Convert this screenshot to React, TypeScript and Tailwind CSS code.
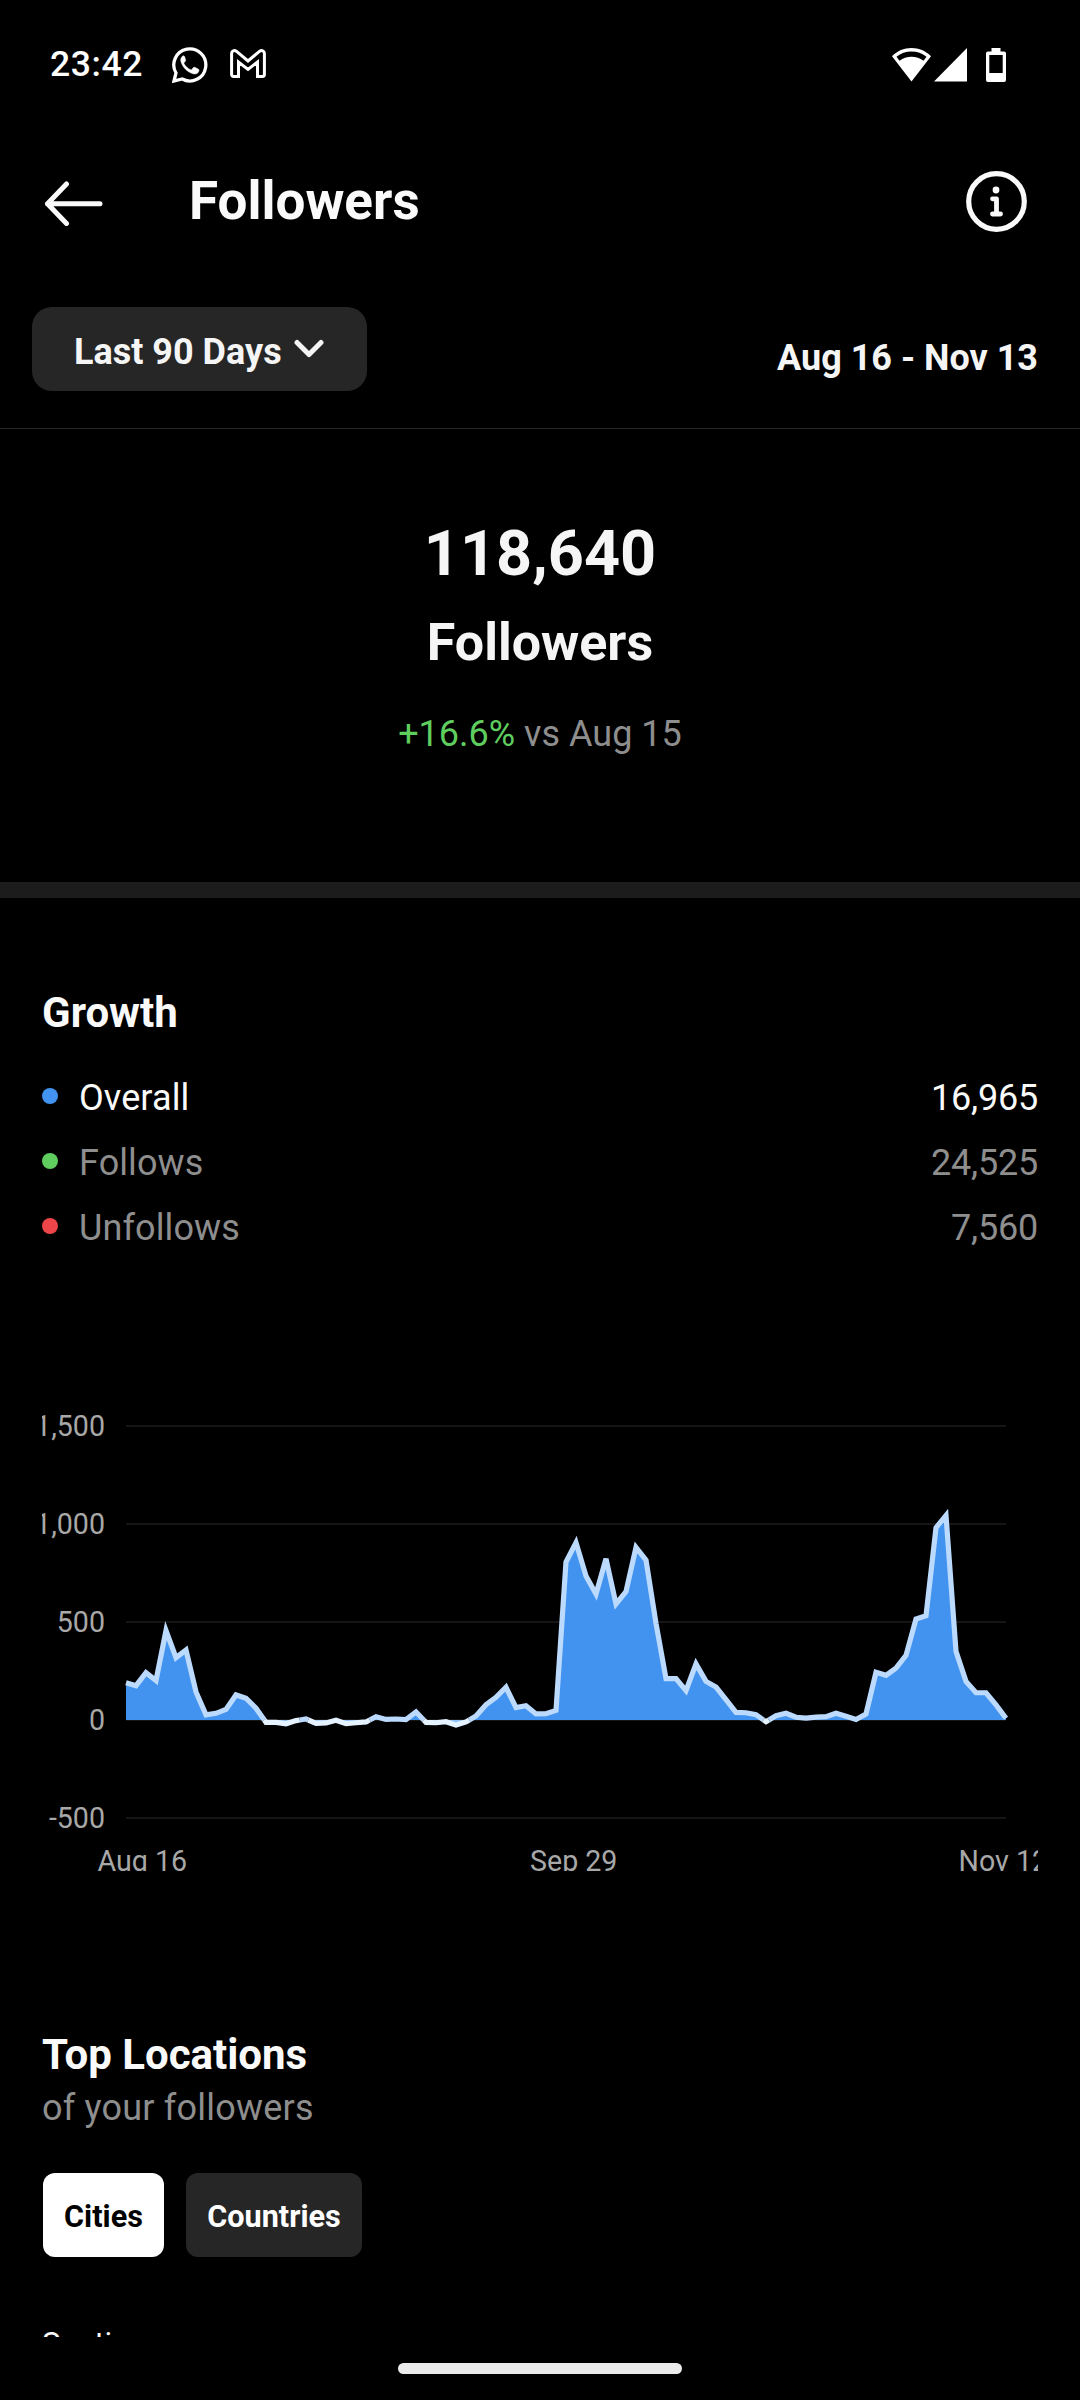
import React from "react";

// Daily net followers, Aug 16 - Nov 12
const growth = [
  190, 175, 241, 201, 456, 318, 357, 143, 26, 34, 54, 128, 111, 60, -12, -12, -19, -3, 5, -17,
  -15, -1, -19, -14, -10, 17, 3, 5, 2, 41, -12, -14, -9, -26, -10, 20, 78, 116, 167, 63,
  73, 31, 32, 49, 806, 905, 735, 643, 823, 592, 655, 881, 816, 493, 211, 211, 150, 286, 197, 168,
  104, 39, 37, 27, -9, 22, 34, 14, 10, 15, 17, 34, 19, 3, 31, 243, 228, 265, 330, 515,
  532, 981, 1044, 350, 197, 139, 139, 77, 9,
];

const LEFT = 84;
const STEP = 10;
const ZERO = 320;
const toY = (value: number) => ZERO - (value * 98) / 500;

interface Segment {
  negative: boolean;
  points: [number, number][];
}

// Splits the series where it crosses zero, so each side gets its own colors
const splitSegments = (values: number[]): Segment[] => {
  const segments: Segment[] = [];
  let current: Segment = { negative: values[0] < 0, points: [] };

  values.forEach((value, i) => {
    const negative = value < 0;
    if (negative !== current.negative) {
      const prev = values[i - 1];
      const x = LEFT + (i - 1 + prev / (prev - value)) * STEP;
      current.points.push([x, ZERO]);
      segments.push(current);
      current = { negative, points: [[x, ZERO]] };
    }
    current.points.push([LEFT + i * STEP, toY(value)]);
  });

  segments.push(current);
  return segments;
};

const segments = splitSegments(growth);

const yTicks = [
  { label: "1,500", value: 1500 },
  { label: "1,000", value: 1000 },
  { label: "500", value: 500 },
  { label: "0", value: 0 },
  { label: "-500", value: -500 },
];

const xTicks = [
  { label: "Aug 16", x: 55.5 },
  { label: "Sep 29", x: 488 },
  { label: "Nov 12", x: 916.5 },
];

const GrowthChart = () => (
  <svg width="996" height="471" viewBox="0 0 996 471" className="mt-[140px] block overflow-hidden">
    {yTicks.map((tick) => (
      <g key={tick.label}>
        <line x1={LEFT} x2={964} y1={toY(tick.value)} y2={toY(tick.value)} stroke="#151515" strokeWidth="2" />
        <text x="63" y={toY(tick.value) + 10} textAnchor="end" fontSize="28.6" fill="#a8a8a8">{tick.label}</text>
      </g>
    ))}

    {segments.map((segment, i) => {
      const line = segment.points.map(([x, y]) => `${x},${y}`).join(" ");
      const first = segment.points[0][0];
      const last = segment.points[segment.points.length - 1][0];
      return (
        <polygon key={i} points={`${first},${ZERO} ${line} ${last},${ZERO}`} fill={segment.negative ? "#8dc0f8" : "#4193ef"} />
      );
    })}
    {segments.map((segment, i) => (
      <polyline
        key={i}
        points={segment.points.map(([x, y]) => `${x},${y}`).join(" ")}
        fill="none"
        stroke={segment.negative ? "#e5f2ff" : "#bbdafd"}
        strokeWidth="5.2"
        strokeMiterlimit="4"
      />
    ))}

    {xTicks.map((tick) => (
      <text key={tick.label} x={tick.x} y="471" fontSize="28.6" fill="#a8a8a8">{tick.label}</text>
    ))}
  </svg>
);

const StatusBar = () => (
  <div className="flex h-[129px] items-center pl-[50px] pr-[74px] text-white">
    <span className="w-[122px] text-[35.5px] font-medium tracking-[0.6px]">23:42</span>
    <svg width="36" height="36" viewBox="0 0 36 36" fill="none">
      <path d="M2 34 4 26A16 16 0 1 1 10.2 32Z" stroke="currentColor" strokeWidth="3.3" />
      <path d="M12.600 9.600c-.5-.9-1.400-.9-2.100-.4-1.500 1.300-2.100 3-1.600 5 1.500 6 6.500 10.800 12.300 12.600 2.500.7 5-.4 5.700-2.700.3-1 0-1.700-.8-2.100l-3.300-1.700c-.6-.3-1.100-.2-1.500.3l-1.400 1.800c-.3.400-.7.500-1.200.3-3-1.300-5-3.200-6.600-6-.2-.4-.2-.7.100-1.100l1.200-1.500c.3-.4.400-.8.200-1.300Z" fill="currentColor" stroke="currentColor" strokeWidth="0.5" />
    </svg>
    <svg width="36" height="29" viewBox="0 0 36 29" fill="none" className="mb-[2px] ml-[22px]">
      <path d="M1.600 4.500C1.600 1.800 4.400.8 6.300 2.200L18 12 29.700 2.200c1.900-1.400 4.700-.4 4.700 2.300v21c0 1.100-.8 1.900-1.900 1.900h-5V13L18 20.400 8.500 13v14.400h-5c-1.100 0-1.900-.8-1.900-1.900Z" stroke="currentColor" strokeWidth="3" />
    </svg>

    <div className="ml-auto flex items-center">
      <svg width="39" height="34" viewBox="0 0 39 34" fill="currentColor">
        <path fillRule="evenodd" d="M19.500 0C12 0 5.300 2.900 0 8.200L19.500 33.500 39 8.200C33.700 2.900 27 0 19.500 0ZM4.500 8.800C8.700 5.300 14 3.500 19.500 3.500S30.300 5.300 34.500 8.800L31.500 12.700C28 10 24 8.700 19.500 8.700S11 10 7.500 12.700Z" />
      </svg>
      <svg width="33" height="34" viewBox="0 0 33 34" fill="currentColor" className="ml-[3px]">
        <path d="M33 0V33.500H0Z" />
      </svg>
      <svg width="20" height="34" viewBox="0 0 20 34" fill="currentColor" className="ml-[19px]">
        <path fillRule="evenodd" d="M5.500 0h9v3.500H18a2 2 0 0 1 2 2V32a2 2 0 0 1-2 2H2a2 2 0 0 1-2-2V5.500a2 2 0 0 1 2-2h3.500ZM3.300 7V25H16.700V7Z" />
      </svg>
    </div>
  </div>
);

const Header = () => (
  <header className="flex h-36 items-center pl-[44px] pr-[53px] text-[#fafafa]">
    <button>
      <svg width="60" height="46" viewBox="0 0 60 46" fill="none" stroke="currentColor" strokeWidth="5" strokeLinecap="round" strokeLinejoin="round" className="mt-[5px]">
        <path d="M22.500 3 3.500 22.700l19 19.700M3.500 22.700H56" />
      </svg>
    </button>
    <h1 className="ml-[85px] text-[53px] font-bold leading-[64px]">Followers</h1>
    <button className="ml-auto">
      <svg width="61" height="61" viewBox="0 0 61 61" fill="none" stroke="currentColor">
        <circle cx="30.500" cy="30.500" r="27.800" strokeWidth="5.200" />
        <circle cx="30" cy="19" r="3.400" fill="currentColor" stroke="none" />
        <path d="M26.500 27.800H30.500V43M26.500 43H34.500" strokeWidth="4.800" strokeLinecap="round" strokeLinejoin="round" />
      </svg>
    </button>
  </header>
);

const FilterBar = () => (
  <div className="flex h-[156px] items-start justify-between border-b border-[#262626] pl-8 pr-[42px] pt-[34px] text-[36px] font-bold text-[#f5f5f5]">
    <button className="flex h-[84px] w-[335px] items-center rounded-[20px] bg-[#262626] pl-[42px]">
      <span className="pt-[5px] leading-[44px]">Last 90 Days</span>
      <svg width="30" height="20" viewBox="0 0 30 20" fill="none" stroke="currentColor" strokeWidth="5" strokeLinecap="round" strokeLinejoin="round" className="ml-3">
        <path d="M3 3.500 15 15.500 27 3.500" />
      </svg>
    </button>
    <span className="pt-[29px] leading-[44px]">Aug 16 - Nov 13</span>
  </div>
);

interface LegendRowProps {
  color: string;
  label: string;
  value: string;
  active?: boolean;
}

const LegendRow: React.FC<LegendRowProps> = ({ color, label, value, active = false }) => (
  <div className={`flex h-[65px] items-center text-[36px] ${active ? "text-[#fafafa]" : "text-[#8e8e8e]"}`}>
    <span className={`mb-[3px] mr-[21px] size-4 rounded-full ${color}`} />
    <span className="tracking-[0.1px]">{label}</span>
    <span className="ml-auto tracking-[-0.2px]">{value}</span>
  </div>
);

export default function App() {
  return (
    <div className="flex h-[2400px] w-[1080px] flex-col overflow-hidden bg-black font-['Roboto',sans-serif]">
      <StatusBar />
      <Header />
      <FilterBar />

      <section className="flex h-[453px] flex-col items-center pt-[88px] text-[#f5f5f5]">
        <p className="text-[63px] font-bold leading-[74px]">118,640</p>
        <p className="mt-[21px] text-[52px] font-bold leading-[62px]">Followers</p>
        <p className="mt-[38px] text-[36px] leading-[44px] text-[#8e8e8e]">
          <span className="text-[#5fce5f]">+16.6%</span> vs Aug 15
        </p>
      </section>

      <div className="h-4 bg-[#1c1c1c]" />

      <main className="px-[42px] pt-[90px]">
        <h2 className="mb-[27px] text-[42px] font-bold leading-[50px] text-[#fafafa]">Growth</h2>
        <LegendRow color="bg-[#4193ef]" label="Overall" value="16,965" active />
        <LegendRow color="bg-[#5fce5f]" label="Follows" value="24,525" />
        <LegendRow color="bg-[#ed4549]" label="Unfollows" value="7,560" />

        <GrowthChart />

        <h2 className="mt-[159px] text-[42px] font-bold leading-[50px] text-[#fafafa]">Top Locations</h2>
        <p className="mt-[6px] text-[36px] leading-[44px] tracking-[0.2px] text-[#8e8e8e]">of your followers</p>

        <div className="mt-[43px] ml-px flex gap-[22px] text-[30.6px] font-bold">
          <button className="h-[84px] w-[121px] rounded-xl bg-white pt-[3px] text-black">Cities</button>
          <button className="h-[84px] w-[176px] rounded-xl bg-[#262626] pt-[3px] text-white">Countries</button>
        </div>

        {/* first city row, cut off by the bottom of the list */}
        <div className="mt-16 h-4 overflow-hidden pt-px text-[31px] leading-[44px] text-[#fafafa]">Santiago</div>
      </main>

      <div className="mx-auto mt-[26px] h-[11px] w-[284px] rounded-full bg-[#ebebeb]" />
    </div>
  );
}
